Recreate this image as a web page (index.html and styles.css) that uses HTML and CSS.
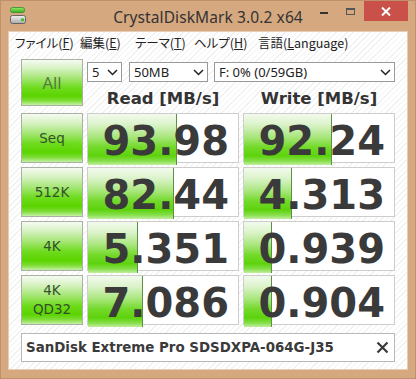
FILE: index.html
```html
<!DOCTYPE html>
<html lang="ja">
<head>
<meta charset="utf-8">
<title>CrystalDiskMark 3.0.2 x64</title>
<link rel="stylesheet" href="styles.css">
</head>
<body>
<div class="window">
  <div class="titlebar">
    <div class="tb-left">
      <svg class="app-icon" width="16" height="18" viewBox="0 0 16 18">
        <defs>
          <linearGradient id="gbar" x1="0" y1="0" x2="0" y2="1">
            <stop offset="0" stop-color="#9be86a"/>
            <stop offset="1" stop-color="#2fae1c"/>
          </linearGradient>
          <linearGradient id="gdrv" x1="0" y1="0" x2="0" y2="1">
            <stop offset="0" stop-color="#f2f2f2"/>
            <stop offset="1" stop-color="#a8a8a8"/>
          </linearGradient>
        </defs>
        <rect x="0.5" y="0.5" width="14" height="5" rx="2" fill="url(#gbar)" stroke="#3a8a2a" stroke-width="0.8"/>
        <rect x="0.5" y="8.5" width="15" height="8" rx="2" fill="url(#gdrv)" stroke="#5a5a5a" stroke-width="0.9"/>
        <rect x="11" y="11.5" width="3" height="2.5" fill="#3fbf2a"/>
      </svg>
    </div>
    <div class="title">CrystalDiskMark 3.0.2 x64</div>
    <div class="tb-right">
      <span class="ctl ctl-min"><span class="min-bar"></span></span>
      <span class="ctl ctl-max"><span class="max-box"></span></span>
      <span class="ctl ctl-close">
        <svg width="10" height="9" viewBox="0 0 10 9"><path d="M1 0.5 L9 8.5 M9 0.5 L1 8.5" stroke="#fff" stroke-width="2"/></svg>
      </span>
    </div>
  </div>
  <div class="client">
    <div class="menubar">
      <span class="menu m1">ファイル(<u>F</u>)</span>
      <span class="menu m2">編集(<u>E</u>)</span>
      <span class="menu m3">テーマ(<u>T</u>)</span>
      <span class="menu m4">ヘルプ(<u>H</u>)</span>
      <span class="menu m5">言語(<u>L</u>anguage)</span>
    </div>
    <div class="panel">
      <div class="top">
        <div class="btn btn-all">All</div>
        <div class="top-right">
          <div class="selects">
            <div class="select s-count"><span>5</span><svg class="chev" width="11" height="7" viewBox="0 0 11 7"><path d="M1 1 L5.5 5.5 L10 1" fill="none" stroke="#222" stroke-width="1.5"/></svg></div>
            <div class="select s-size"><span>50MB</span><svg class="chev" width="11" height="7" viewBox="0 0 11 7"><path d="M1 1 L5.5 5.5 L10 1" fill="none" stroke="#222" stroke-width="1.5"/></svg></div>
            <div class="select s-drive"><span>F: 0% (0/59GB)</span><svg class="chev" width="11" height="7" viewBox="0 0 11 7"><path d="M1 1 L5.5 5.5 L10 1" fill="none" stroke="#222" stroke-width="1.5"/></svg></div>
          </div>
          <div class="headers">
            <div class="hdr">Read [MB/s]</div>
            <div class="hdr">Write [MB/s]</div>
          </div>
        </div>
      </div>
      <div class="rows">
        <div class="row">
          <div class="btn btn-test">Seq</div>
          <div class="cell"><div class="bar" style="width:59%"></div><span class="val">93.98</span></div>
          <div class="cell"><div class="bar" style="width:58.5%"></div><span class="val">92.24</span></div>
        </div>
        <div class="row">
          <div class="btn btn-test">512K</div>
          <div class="cell"><div class="bar" style="width:57.3%"></div><span class="val">82.44</span></div>
          <div class="cell"><div class="bar" style="width:32%"></div><span class="val">4.313</span></div>
        </div>
        <div class="row">
          <div class="btn btn-test">4K</div>
          <div class="cell"><div class="bar" style="width:33.3%"></div><span class="val">5.351</span></div>
          <div class="cell"><div class="bar" style="width:18.7%"></div><span class="val">0.939</span></div>
        </div>
        <div class="row">
          <div class="btn btn-test btn-two">4K<br>QD32</div>
          <div class="cell"><div class="bar" style="width:36.5%"></div><span class="val">7.086</span></div>
          <div class="cell"><div class="bar" style="width:18.5%"></div><span class="val">0.904</span></div>
        </div>
      </div>
      <div class="comment">
        <span class="comment-text">SanDisk Extreme Pro SDSDXPA-064G-J35</span>
        <svg class="clear" width="13" height="13" viewBox="0 0 13 13"><path d="M1.5 1.5 L11.5 11.5 M11.5 1.5 L1.5 11.5" stroke="#3a3a3a" stroke-width="2.2"/></svg>
      </div>
    </div>
  </div>
</div>
</body>
</html>
```
FILE: styles.css
```css
* { box-sizing: border-box; }
html, body { margin: 0; padding: 0; }
body { width: 416px; height: 379px; overflow: hidden; background: #d4a67e; }

.window {
  width: 416px;
  height: 379px;
  background: #d5a880;
  border: 1px solid #bf9069;
  display: flex;
  flex-direction: column;
  padding: 0 7px 8px 7px;
}

.titlebar {
  height: 30px;
  display: grid;
  grid-template-columns: 1fr auto 1fr;
  align-items: start;
  margin: 0 -7px;
}
.tb-left { padding: 6px 0 0 9px; }
.app-icon { display: block; }
.title {
  font-family: "Noto Sans", "Open Sans", sans-serif;
  font-size: 15.5px;
  line-height: 18px;
  color: #333;
  padding-top: 7px;
  letter-spacing: 0.1px;
}
.tb-right { display: flex; justify-content: flex-end; padding-right: 7px; }
.ctl { display: flex; align-items: center; justify-content: center; height: 20px; }
.ctl-min { width: 26px; }
.min-bar { width: 8px; height: 2px; background: #333; margin-top: 4px; }
.ctl-max { width: 27px; }
.max-box { width: 9px; height: 7px; border: 1px solid #555; border-top-width: 2px; }
.ctl-close { width: 44px; background: #c9514a; }
.ctl-close svg { display: block; }

.client {
  flex: 1;
  background-color: #fff;
  background-image: repeating-linear-gradient(135deg, #ffffff 0 3px, #f1f1f1 3px 4px);
  border: 1px solid #e6cdb5;
  display: flex;
  flex-direction: column;
}

.menubar {
  height: 21px;
  display: flex;
  align-items: center;
  padding-left: 6px;
  font-family: "Noto Sans CJK JP", "Noto Sans", sans-serif;
  font-size: 12.5px;
  color: #222;
  font-feature-settings: "palt";
}
.menu { white-space: nowrap; }
.menu u { text-underline-offset: 1px; }
.m1 { width: 65px; }
.m2 { width: 55px; }
.m3 { width: 59px; }
.m4 { width: 64px; }

.panel {
  padding: 6px 12px 7px 12px;
  display: flex;
  flex-direction: column;
}

.top { display: flex; height: 47px; }
.btn {
  border: 1px solid #a9b1a4;
  background: linear-gradient(to bottom, #f6fbf2 0%, #d8f2c4 18%, #a6e676 40%, #6ddb1c 62%, #5bd400 80%, #7cdc34 90%, #c4f0a4 100%);
  display: flex;
  align-items: center;
  justify-content: center;
  text-align: center;
  width: 62px;
  flex: none;
}
.btn-all {
  height: 47px;
  font-family: "Noto Sans", "Open Sans", sans-serif;
  font-size: 16.5px;
  color: #557a45;
}
.top-right { margin-left: 4px; width: 308px; display: flex; flex-direction: column; }
.selects { display: flex; margin-top: 3px; height: 20px; }
.select {
  height: 20px;
  border: 1px solid #9a9a9a;
  background: #fff;
  display: flex;
  align-items: center;
  justify-content: space-between;
  padding: 0 3px 0 4px;
  font-family: "Noto Sans", "Open Sans", sans-serif;
  font-size: 13px;
  color: #222;
}
.chev { display: block; }
.s-count { width: 35px; }
.s-size { width: 79px; margin-left: 7px; }
.s-drive { width: 181px; margin-left: 6px; }

.headers { display: flex; gap: 4px; margin-top: 7px; }
.hdr {
  width: 152px;
  text-align: center;
  font-family: "DejaVu Sans", Verdana, sans-serif;
  font-weight: bold;
  font-size: 16.5px;
  line-height: 20px;
  color: #333;
}

.rows { margin-top: 7px; display: flex; flex-direction: column; gap: 4px; }
.row { display: flex; gap: 4px; height: 50px; }
.btn-test {
  height: 50px;
  font-family: "DejaVu Sans", Verdana, sans-serif;
  font-size: 13.5px;
  color: #34502a;
}
.btn-two { line-height: 19px; }
.cell {
  width: 152px;
  height: 50px;
  border: 1px solid #cdcdcd;
  background: #fff;
  display: grid;
  grid-template: 1fr / 1fr;
}
.bar {
  grid-area: 1 / 1;
  justify-self: start;
  height: 100%;
  background: linear-gradient(to bottom, #f3faee 0%, #dcf3cb 20%, #a9e67c 45%, #73d92a 65%, #5dd30c 82%, #86de4a 92%, #c2eea0 100%);
  border-right: 1px solid #5d8f44;
}
.val {
  grid-area: 1 / 1;
  justify-self: end;
  align-self: center;
  padding-right: 9px;
  font-family: "DejaVu Sans", Verdana, sans-serif;
  font-weight: bold;
  font-size: 40px;
  line-height: 48px;
  color: #3a3a3a;
  margin-top: 3px;
}

.comment {
  margin-top: 8px;
  height: 29px;
  border: 1px solid #b8b8b8;
  background: #fff;
  display: flex;
  align-items: center;
  justify-content: space-between;
  padding: 0 5px 0 4px;
}
.comment-text {
  font-family: "DejaVu Sans", Verdana, sans-serif;
  font-weight: bold;
  font-size: 13.4px;
  color: #3a3a3a;
}
.clear { display: block; }
```
